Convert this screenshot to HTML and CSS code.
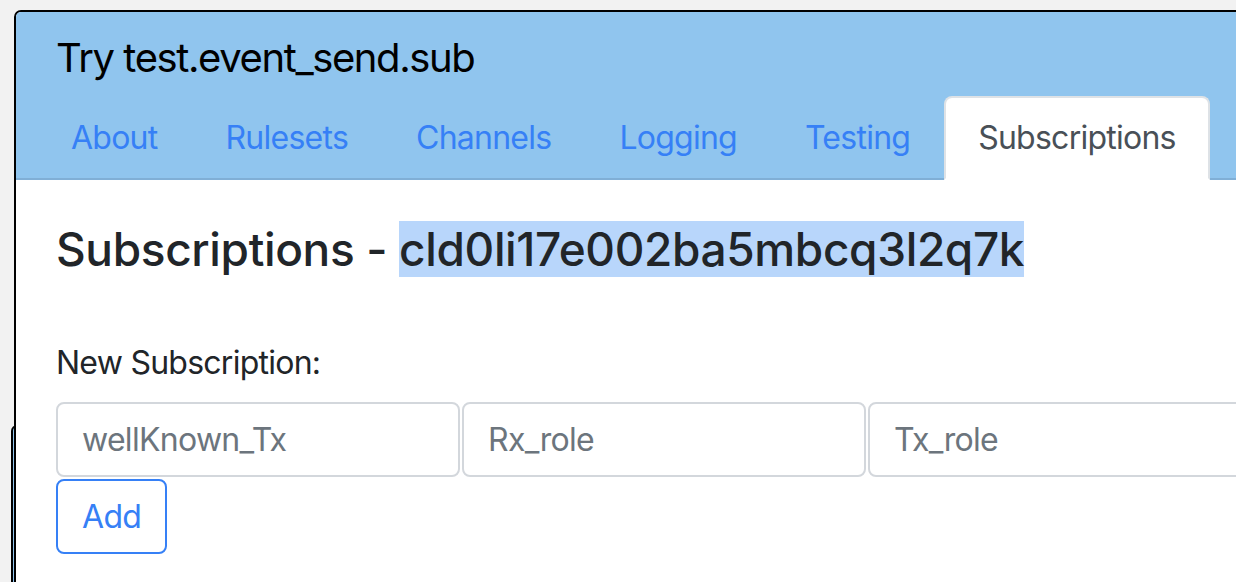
FILE: index.html
```html
<!DOCTYPE html>
<html lang="en">
<head>
<meta charset="utf-8">
<title>Try test.event_send.sub</title>
<link rel="stylesheet" href="styles.css">
</head>
<body>
<div class="back-window"></div>
<div class="window">
  <header class="header">
    <h1 class="title">Try test.event_send.sub</h1>
    <nav class="tabs">
      <a class="tab" href="#">About</a>
      <a class="tab" href="#">Rulesets</a>
      <a class="tab" href="#">Channels</a>
      <a class="tab" href="#">Logging</a>
      <a class="tab" href="#">Testing</a>
      <a class="tab active" href="#">Subscriptions</a>
    </nav>
  </header>
  <main class="content">
    <h2 class="heading">Subscriptions - <span class="selected">cld0li17e002ba5mbcq3l2q7k</span></h2>
    <label class="label">New Subscription:</label>
    <div class="inputs">
      <input class="field" type="text" placeholder="wellKnown_Tx">
      <input class="field" type="text" placeholder="Rx_role">
      <input class="field" type="text" placeholder="Tx_role">
    </div>
    <button class="btn" type="button">Add</button>
  </main>
</div>
</body>
</html>
```
FILE: styles.css
```css
html, body {
  margin: 0;
  padding: 0;
  height: 100%;
  overflow: hidden;
}
body {
  background: #f2f2f2;
  font-family: Inter, "Liberation Sans", sans-serif;
  position: relative;
}
.back-window {
  position: absolute;
  left: 11px;
  top: 425px;
  width: 20px;
  height: 300px;
  border: 2px solid #000;
  border-radius: 6px 0 0 0;
  background: #90c5ee;
  z-index: 0;
}
.window {
  position: relative;
  z-index: 1;
  margin: 10px 0 0 14px;
  width: 1300px;
  height: 700px;
  border: 2px solid #000;
  border-radius: 7px 0 0 0;
  background: #fff;
  overflow: hidden;
}
.header {
  background: #90c5ee;
  display: flex;
  flex-direction: column;
}
.title {
  margin: 0;
  padding: 22px 0 0 40px;
  height: 62px;
  font-size: 40px;
  font-weight: 400;
  line-height: 48px;
  letter-spacing: -1.4px;
  color: #000;
}
.tabs {
  display: flex;
  padding-left: 21px;
  border-bottom: 2px solid #80afd6;
}
.tab {
  display: block;
  padding: 16px 32px;
  border: 2px solid transparent;
  border-radius: 8px 8px 0 0;
  margin-bottom: -2px;
  font-size: 32px;
  line-height: 48px;
  letter-spacing: -0.75px;
  color: #3680f6;
  text-decoration: none;
}
.tab.active {
  background: #fff;
  border-color: #dee2e6 #dee2e6 #fff;
  color: #495057;
}
.content {
  padding: 0 0 0 40px;
  display: flex;
  flex-direction: column;
  align-items: flex-start;
}
.heading {
  margin: 41px 0 0 0;
  font-size: 46px;
  font-weight: 500;
  line-height: 56px;
  letter-spacing: -0.36px;
  color: #212529;
}
.selected {
  background: #b8d6fb;
}
.label {
  margin-top: 62px;
  font-size: 32px;
  line-height: 48px;
  letter-spacing: -0.75px;
  color: #212529;
}
.inputs {
  display: flex;
  gap: 2px;
  margin-top: 15px;
}
.field {
  box-sizing: border-box;
  width: 404px;
  height: 75px;
  padding: 0 24px;
  border: 2px solid #d3d7dc;
  border-radius: 8px;
  font-family: inherit;
  font-size: 32px;
  letter-spacing: -0.7px;
  color: #212529;
  background: #fff;
}
.field::placeholder {
  color: #6c757d;
}
.btn {
  margin-top: 2px;
  height: 75px;
  padding: 0 24px;
  border: 2px solid #3680f6;
  border-radius: 8px;
  background: #fff;
  font-family: inherit;
  font-size: 32px;
  letter-spacing: -0.7px;
  color: #3680f6;
}
```
